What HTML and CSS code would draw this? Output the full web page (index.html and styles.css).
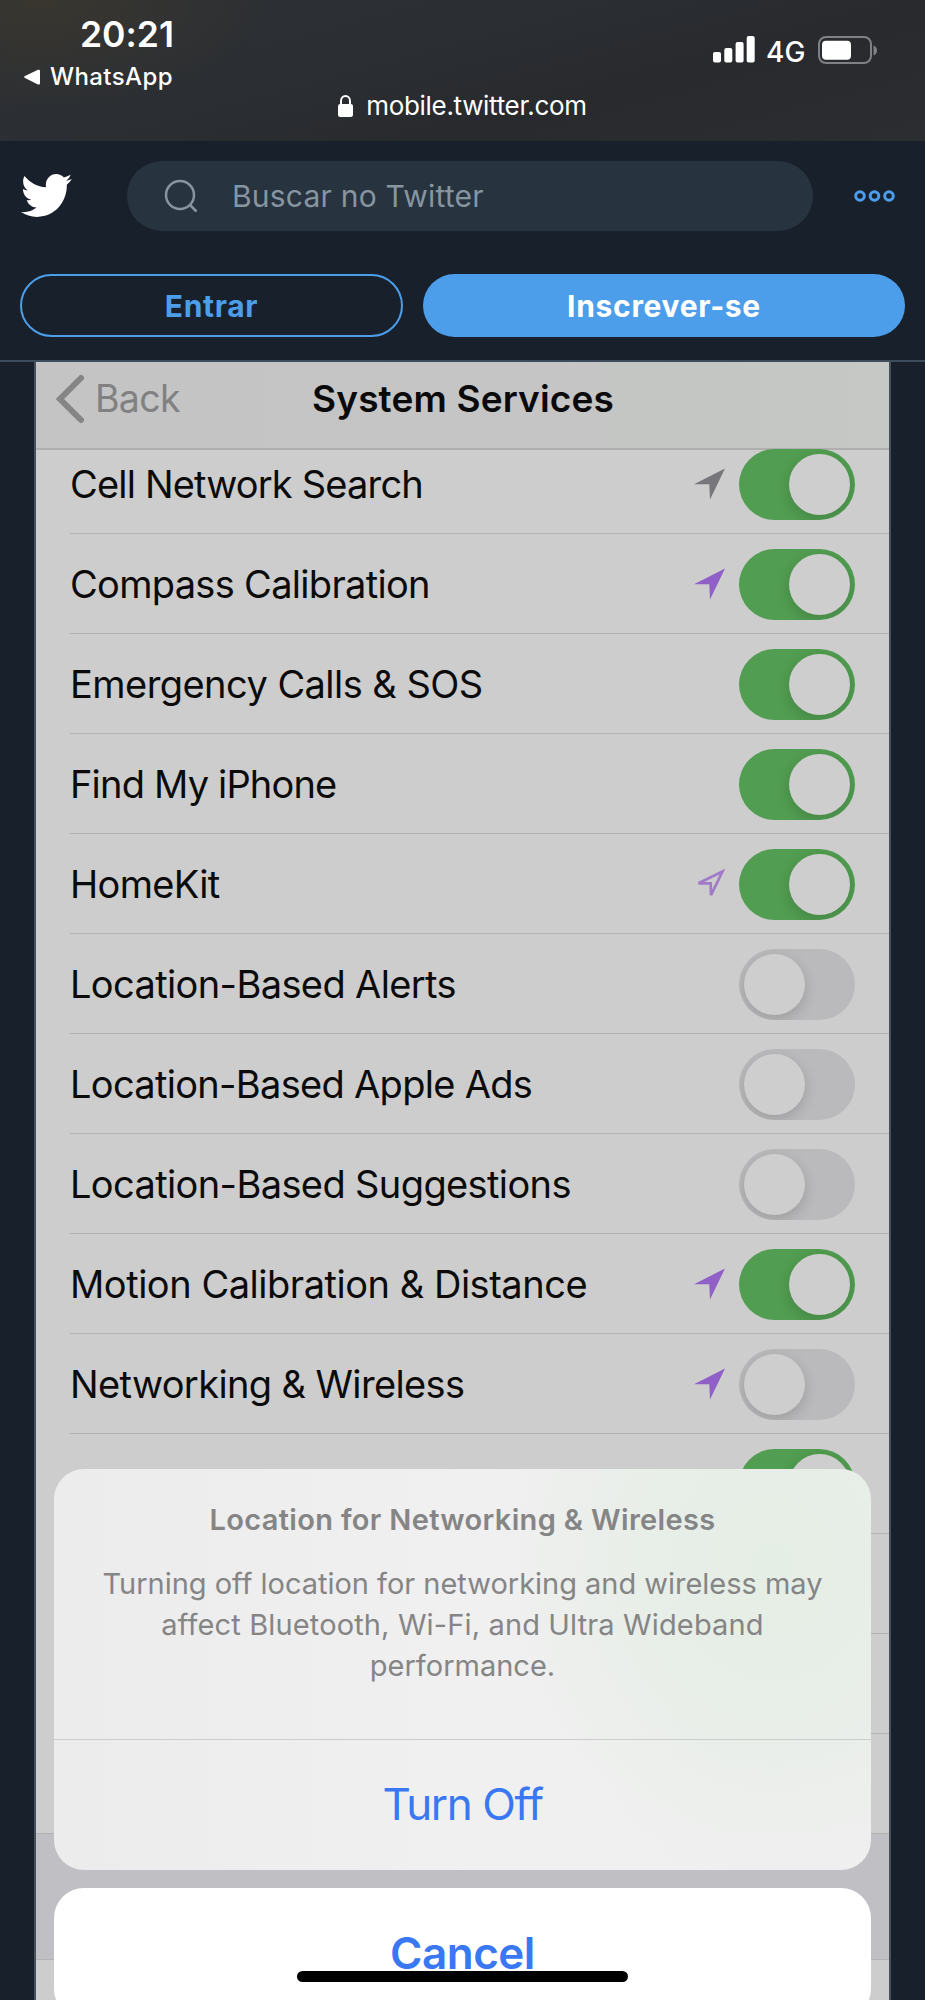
FILE: index.html
```html
<!DOCTYPE html>
<html lang="pt">
<head>
<meta charset="utf-8">
<meta name="viewport" content="width=device-width">
<title>Twitter</title>
<link rel="stylesheet" href="styles.css">
</head>
<body>
<svg width="0" height="0" class="defs">
  <symbol id="arrow" viewBox="0 0 32 32"><path d="M31 .5 0 16.300h15.300L16 31.500z"/></symbol>
  <symbol id="arrow-outline" viewBox="0 0 32 32"><path d="M28.500 3.500 4.500 15.300h12.200L17 27.200z" fill="none" stroke="currentColor" stroke-width="2.700"/></symbol>
</svg>
<main class="phone">
  <div class="status">
    <div class="status-left">
      <div class="time"><span>20:21</span></div>
      <div class="back-app"><svg width="16" height="16" viewBox="0 0 16 16"><path d="M1 7.100 14 .8q2-.6 2 1v12.600q0 1.600-2 1L1 9.100q-1.800-1 0-2z" fill="#fff"/></svg><span>WhatsApp</span></div>
    </div>
    <div class="url"><svg width="15" height="22" viewBox="0 0 15 22"><rect y="9" width="15" height="13" rx="2.200" fill="#fff"/><path d="M3 10V6.200C3 3 5 1.100 7.500 1.100S12 3 12 6.200V10" fill="none" stroke="#fff" stroke-width="2"/></svg><span>mobile.twitter.com</span></div>
    <div class="status-right">
      <svg width="42" height="27" viewBox="0 0 42 27" fill="#fff"><rect y="16" width="8" height="10.500" rx="2"/><rect x="11.300" y="12" width="8" height="14.500" rx="2"/><rect x="22.600" y="6" width="8" height="20.500" rx="2"/><rect x="33.700" width="8" height="26.500" rx="2"/></svg>
      <span class="net">4G</span>
      <svg width="60" height="28" viewBox="0 0 60 28"><rect x="1" y="1" width="52" height="26" rx="7" fill="none" stroke="#7f8184" stroke-width="2"/><rect x="4" y="4.700" width="29" height="19" rx="4" fill="#fff"/><path d="M55.500 9.500q3.500 1.300 3.500 5t-3.500 5z" fill="#7f8184"/></svg>
    </div>
  </div>
  <header class="header">
    <div class="top">
      <svg class="bird" width="51" height="43" viewBox="0.950 2.750 22.700 18.500" preserveAspectRatio="none"><path fill="#fff" d="M23.643 4.937c-.835.37-1.732.62-2.675.733.962-.576 1.700-1.490 2.048-2.578-.9.534-1.897.922-2.958 1.130-.85-.904-2.060-1.470-3.400-1.470-2.572 0-4.658 2.086-4.658 4.660 0 .364.042.718.120 1.060-3.873-.195-7.304-2.050-9.602-4.868-.4.690-.63 1.490-.63 2.342 0 1.616.823 3.043 2.072 3.878-.764-.025-1.482-.234-2.110-.583v.06c0 2.257 1.605 4.140 3.737 4.568-.392.106-.803.162-1.227.162-.3 0-.593-.028-.877-.082.593 1.850 2.313 3.198 4.352 3.234-1.595 1.250-3.604 1.995-5.786 1.995-.376 0-.747-.022-1.112-.065 2.062 1.323 4.510 2.093 7.140 2.093 8.570 0 13.255-7.098 13.255-13.254 0-.2-.005-.402-.014-.602.910-.658 1.700-1.477 2.323-2.410z"/></svg>
      <div class="search"><svg width="34" height="34" viewBox="0 0 34 34" fill="none" stroke="#8795a1" stroke-width="2.500"><circle cx="16" cy="16" r="14"/><path d="m25.500 25.500 7 7"/></svg><span>Buscar no Twitter</span></div>
      <svg class="more" width="42" height="12" viewBox="0 0 42 12" fill="none" stroke="#4c9eeb" stroke-width="3"><circle cx="6" cy="6" r="4.300"/><circle cx="20.500" cy="6" r="4.300"/><circle cx="35" cy="6" r="4.300"/></svg>
    </div>
    <div class="actions"><div class="btn login"><span>Entrar</span></div><div class="btn signup"><span>Inscrever-se</span></div></div>
  </header>
  <section class="photo">
    <div class="nav">
      <svg width="28" height="50" viewBox="0 0 28 50"><path d="M25 4 4 25l21 21" fill="none" stroke="#858585" stroke-width="6" stroke-linecap="round" stroke-linejoin="miter"/></svg>
      <span class="nav-back">Back</span><span class="nav-title">System Services</span>
    </div>
    <div class="list">
      <div class="row"><span class="l1">Cell Network Search</span><svg class="loc grey"><use href="#arrow"/></svg><i class="toggle on"></i></div>
      <div class="row"><span class="l2">Compass Calibration</span><svg class="loc"><use href="#arrow"/></svg><i class="toggle on"></i></div>
      <div class="row"><span class="l3">Emergency Calls &amp; SOS</span><i class="toggle on"></i></div>
      <div class="row"><span class="l4">Find My iPhone</span><i class="toggle on"></i></div>
      <div class="row"><span class="l5">HomeKit</span><svg class="loc light"><use href="#arrow-outline"/></svg><i class="toggle on"></i></div>
      <div class="row"><span class="l6">Location-Based Alerts</span><i class="toggle"></i></div>
      <div class="row"><span class="l7">Location-Based Apple Ads</span><i class="toggle"></i></div>
      <div class="row"><span class="l8">Location-Based Suggestions</span><i class="toggle"></i></div>
      <div class="row"><span class="l9">Motion Calibration &amp; Distance</span><svg class="loc"><use href="#arrow"/></svg><i class="toggle on"></i></div>
      <div class="row"><span class="l10">Networking &amp; Wireless</span><svg class="loc"><use href="#arrow"/></svg><i class="toggle"></i></div>
      <div class="row"><i class="toggle on"></i></div>
      <div class="row"></div><div class="row"></div><div class="row last"></div>
    </div>
    <div class="group-gap"></div>
    <div class="sheet">
      <div class="card">
        <div class="message"><h2>Location for Networking &amp; Wireless</h2><p><span class="b1">Turning off location for networking and wireless may</span><br><span class="b2">affect Bluetooth, Wi-Fi, and Ultra Wideband</span><br><span class="b3">performance.</span></p></div>
        <div class="turn-off"><span>Turn Off</span></div>
      </div>
      <div class="cancel"><span>Cancel</span></div>
    </div>
  </section>
  <div class="home-indicator"></div>
</main>
</body>
</html>
```
FILE: styles.css
```css
* { box-sizing: border-box; }
body { margin: 0; background: #18202c; font-family: Inter, "Liberation Sans", sans-serif; font-variant-ligatures: none; }
svg { display: block; flex: none; }
span { white-space: nowrap; }
.defs { position: absolute; }
.phone { position: relative; width: 925px; height: 2000px; overflow: hidden; background: #18202c; }

.status { height: 141px; color: #fff; display: grid; grid-template-columns: 300px 325px 300px;
  background: radial-gradient(ellipse 230px 110px at 40px 0, #39362f, rgba(57,54,47,0)), linear-gradient(165deg, #2d3034 0%, #2b2e32 40%, #282a2e 65%, #2b2d30 100%); }
.time { padding: 14px 0 0 80px; height: 56px; font-size: 35.500px; line-height: 42px; font-weight: 600; }
.back-app { display: flex; align-items: center; padding-left: 24px; gap: 10px; height: 41px; font-size: 24px; font-weight: 500; letter-spacing: .4px; }
.url { display: flex; justify-content: center; align-items: center; gap: 13px; margin-top: 85px; height: 41px; font-size: 26px; letter-spacing: -.32px; }
.status-right { display: flex; align-items: flex-start; padding: 36px 0 0 88px; }
.net { font-size: 28px; line-height: 32px; font-weight: 500; width: 41px; margin: 0 11px; letter-spacing: 0; }

.header { height: 221px; border-bottom: 2px solid #3d4d5e; }
.top { display: flex; align-items: center; padding: 20px 28px 0 21px; height: 90px; }
.bird { margin-top: -1px; }
.search { margin-left: 55px; width: 686px; height: 70px; border-radius: 35px; background: #27333f; display: flex; align-items: center; padding-left: 37px; gap: 34px; color: #8795a1; font-size: 30px; letter-spacing: .22px; }
.more { margin-left: 41px; }
.actions { display: flex; gap: 20px; padding: 43px 20px 0; }
.btn { height: 63px; border-radius: 32px; display: flex; align-items: center; justify-content: center; font-weight: 700; font-size: 30px; letter-spacing: .7px; }
.login { width: 383px; border: 2px solid #4c9eeb; color: #4c9eeb; }
.signup { width: 482px; background: #4c9eeb; color: #fff; }

.photo { position: relative; width: 857px; height: 1638px; margin-left: 34px; border: solid #46515c; border-width: 0 2px; background: #cdcdcd; }
.nav { height: 88px; display: flex; border-bottom: 2px solid #afafaf; background: linear-gradient(90deg, #c4c4c5 0%, #c5c5c5 55%, #c3c6c3 80%, #c6c8c5 100%); padding: 12px 0 0 20px; }
.nav-back { color: #818181; font-size: 37.500px; line-height: 50px; width: 88px; margin-left: 11px; letter-spacing: -.7px; }
.nav-title { color: #0a0a0a; font-weight: 600; font-size: 37px; line-height: 50px; margin-left: 129px; letter-spacing: .15px; }
.list { margin-top: -16px; position: relative; }
.row { height: 100px; margin-left: 34px; padding-right: 34px; border-bottom: 1px solid #b2b2b2; display: flex; align-items: center; color: #0b0b0b; font-size: 38px; }
.last { margin-left: 0; }
.l1, .l4 { letter-spacing: -.82px; }
.l2, .l5, .l7 { letter-spacing: -.69px; }
.l3 { letter-spacing: -.55px; }
.l6, .l8, .l10 { letter-spacing: -.62px; }
.l9 { letter-spacing: -.47px; }
.toggle { margin: 1px 0 0 auto; width: 116px; height: 71px; border-radius: 36px; background: #bababc; flex: none; overflow: hidden; padding: 5px; }
.toggle::before { content: ""; display: block; width: 61px; height: 61px; border-radius: 50%; background: #cecece; box-shadow: 0 4px 13px rgba(0,0,0,.16); }
.toggle.on { background: #519d51; }
.toggle.on::before { margin-left: 45px; }
.loc { margin-left: auto; width: 32px; height: 32px; fill: #905fc8; color: #a17ac8; }
.loc + .toggle { margin-left: 13px; }
.loc.grey { fill: #77767a; }
.group-gap { height: 126px; background: #c0bfc4; border-bottom: 1px solid #b2b2b3; }

.sheet { position: absolute; top: 1106.500px; left: 18px; width: 817px; display: flex; flex-direction: column; gap: 18px; text-align: center; }
.card { height: 401px; border-radius: 30px; background: radial-gradient(ellipse 280px 310px at 88% 24%, #e5eee5 0%, #e8eee8 45%, rgba(235,238,235,0) 100%), linear-gradient(90deg, #ececec, #f0f0f0 50%, #efefef); }
.message { height: 271px; border-bottom: 1px solid #ccc; color: #858585; }
h2 { margin: 0; padding-top: 31px; font-size: 29px; line-height: 40px; font-weight: 600; letter-spacing: .34px; }
p { margin: 23px 0 0; font-size: 29px; line-height: 41px; }
.b1 { letter-spacing: -.02px; }
.b2 { letter-spacing: .14px; }
.turn-off, .cancel { height: 129px; display: flex; align-items: center; justify-content: center; color: #3978f2; font-size: 44px; letter-spacing: -1.400px; }
.cancel { height: 131px; border-radius: 30px; background: #fff; font-weight: 600; letter-spacing: -.5px; }
.home-indicator { position: absolute; left: 297px; top: 1971px; width: 331px; height: 11px; border-radius: 6px; background: #000; }
```
